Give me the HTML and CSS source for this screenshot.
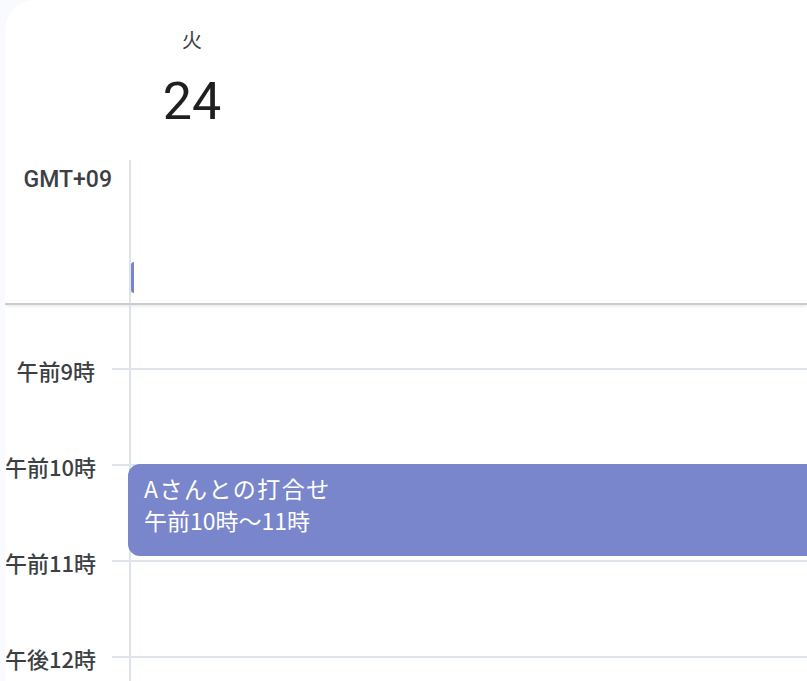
FILE: index.html
```html
<!DOCTYPE html>
<html lang="ja">
<head>
<meta charset="utf-8">
<link rel="stylesheet" href="styles.css">
</head>
<body>
<div class="panel">
  <div class="header">
    <div class="gutter-head"></div>
    <div class="day-head">
      <div class="dow">火</div>
      <div class="date">24</div>
    </div>
  </div>
  <div class="allday">
    <div class="tz">GMT+09</div>
    <div class="allday-col"><span class="sliver"></span></div>
  </div>
  <div class="grid">
    <div class="row first">
      <div class="label"></div>
      <div class="tick none"></div>
      <div class="cell none"></div>
    </div>
    <div class="row">
      <div class="label"><span>午前9時</span></div>
      <div class="tick"></div>
      <div class="cell"></div>
    </div>
    <div class="row">
      <div class="label"><span>午前10時</span></div>
      <div class="tick"></div>
      <div class="cell">
        <div class="event">
          <div class="ev-title">Aさんとの打合せ</div>
          <div class="ev-time">午前10時～11時</div>
        </div>
      </div>
    </div>
    <div class="row">
      <div class="label"><span>午前11時</span></div>
      <div class="tick"></div>
      <div class="cell"></div>
    </div>
    <div class="row">
      <div class="label"><span>午後12時</span></div>
      <div class="tick"></div>
      <div class="cell"></div>
    </div>
  </div>
</div>
</body>
</html>
```
FILE: styles.css
```css
html, body {
  margin: 0;
  padding: 0;
  height: 100%;
  overflow: hidden;
}
body {
  background: #f8fafd;
  font-family: "Noto Sans CJK JP", sans-serif;
  color: #1f1f1f;
}
.panel {
  margin-left: 5px;
  height: 100%;
  background: #ffffff;
  border-top-left-radius: 30px;
  overflow: hidden;
}
.header {
  display: flex;
  height: 160px;
}
.gutter-head {
  width: 124px;
}
.day-head {
  width: 126px;
  display: flex;
  flex-direction: column;
  align-items: center;
}
.dow {
  margin-top: 27px;
  font-size: 20px;
  line-height: 26px;
  color: #3c4043;
}
.date {
  margin-top: 19px;
  font-family: Roboto, sans-serif;
  font-size: 52px;
  line-height: 60px;
  color: #1f1f1f;
}
.allday {
  display: flex;
  height: 143px;
  border-bottom: 2px solid #c9cbcd;
  box-shadow: 0 2px 3px -1px rgba(60, 64, 67, 0.15);
  position: relative;
  z-index: 2;
}
.tz {
  width: 107px;
  text-align: right;
  padding-right: 17px;
  font-family: Roboto, "Noto Sans CJK JP", sans-serif;
  font-size: 23px;
  font-weight: 500;
  line-height: 24px;
  padding-top: 8px;
  color: #3c4043;
}
.allday-col {
  flex: 1;
  border-left: 2px solid #dfe3ec;
  position: relative;
}
.sliver {
  position: absolute;
  left: 0;
  top: 102px;
  width: 3px;
  height: 31px;
  background: #7986cb;
  border-radius: 3px 0 0 3px;
}
.grid {
  display: flex;
  flex-direction: column;
}
.row {
  display: flex;
  height: 96px;
}
.row.first {
  height: 63px;
}
.label {
  width: 90px;
  flex: none;
}
.label span {
  display: block;
  text-align: right;
  font-size: 22px;
  font-weight: 500;
  line-height: 24px;
  margin-top: -10px;
  color: #3c4043;
  white-space: nowrap;
}
.tick {
  flex: none;
  width: 17px;
  margin-left: 17px;
  border-top: 2px solid #dfe3ec;
}
.cell {
  flex: 1;
  border-top: 2px solid #dfe3ec;
  border-left: 2px solid #dfe3ec;
  position: relative;
}
.tick.none, .cell.none {
  border-top-color: transparent;
}
.event {
  position: absolute;
  left: -3px;
  top: -2px;
  right: -20px;
  height: 92px;
  background: #7986cb;
  border-radius: 12px;
  color: #ffffff;
  padding: 8px 16px;
  box-sizing: border-box;
  font-size: 23px;
  line-height: 32px;
  z-index: 3;
}
.ev-title {
  letter-spacing: 1.5px;
}
```
